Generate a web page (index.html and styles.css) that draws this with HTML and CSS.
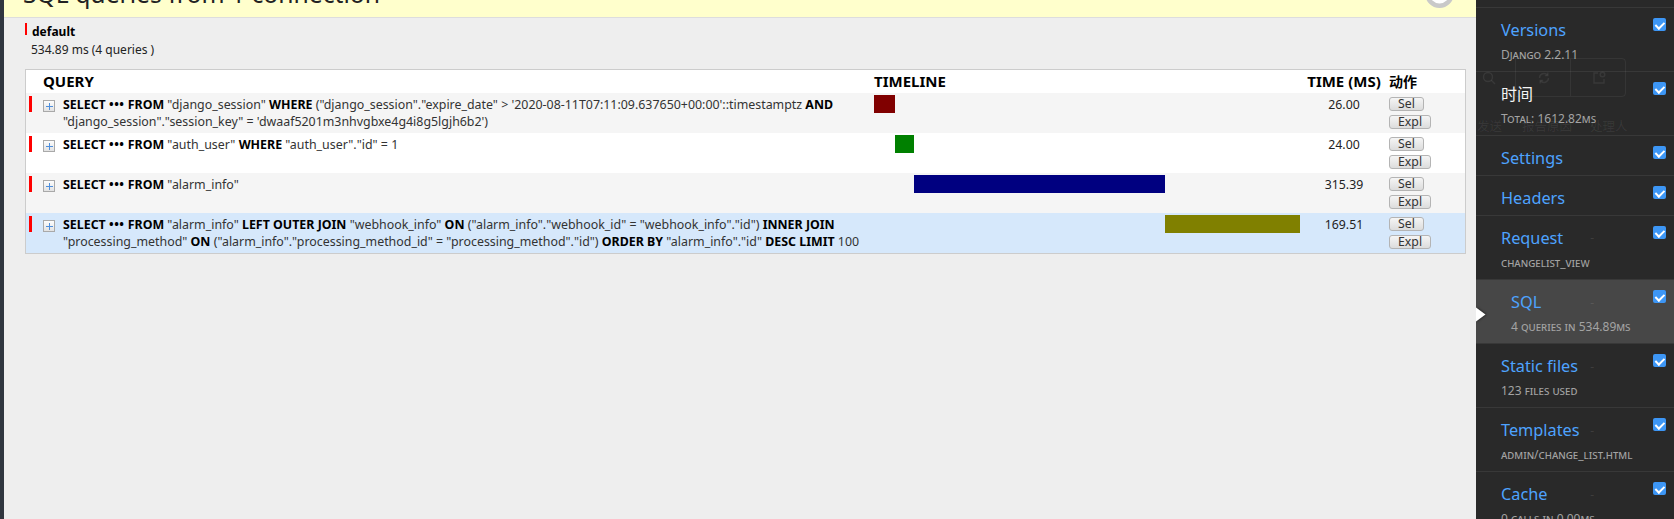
FILE: index.html
```html
<!DOCTYPE html>
<html lang="en">
<head>
<meta charset="utf-8">
<title>SQL queries</title>
<link rel="stylesheet" href="styles.css">
</head>
<body>
<div class="app">
  <div class="edge"></div>
  <main class="panel">
    <div class="panel-title">
      <h3>SQL queries from 1 connection</h3>
      <span class="close"><svg width="29" height="29" viewBox="0 0 29 29"><circle cx="14.5" cy="14.5" r="12.2" fill="#ffffff" stroke="#c9c9c9" stroke-width="4.4"/></svg></span>
    </div>
    <div class="panel-content">
      <h4 class="db-name"><span class="swatch"></span><span class="db-label">default</span></h4>
      <p class="db-summary">534.89 ms (4 queries )</p>
      <table class="sql">
        <colgroup>
          <col class="c-color"><col class="c-toggle"><col class="c-query"><col class="c-timeline"><col class="c-time"><col class="c-actions">
        </colgroup>
        <thead>
          <tr>
            <th class="h-color"></th>
            <th class="h-query" colspan="2">Query</th>
            <th class="h-timeline">Timeline</th>
            <th class="h-time">Time (ms)</th>
            <th class="h-actions">动作</th>
          </tr>
        </thead>
        <tbody>
          <tr class="odd">
            <td class="color"><span class="marker"></span></td>
            <td class="toggle"><span class="toggle-box"><svg width="10" height="10" viewBox="0 0 10 10"><path d="M5.5 2v7M2 5.5h7" stroke="#4f8fdc" stroke-width="1"/></svg></span></td>
            <td class="query"><b>SELECT</b> <b class="dots">•••</b> <b>FROM</b> "django_session" <b>WHERE</b> ("django_session"."expire_date" &gt; '2020-08-11T07:11:09.637650+00:00'::timestamptz <b>AND</b> "django_session"."session_key" = 'dwaaf5201m3nhvgbxe4g4i8g5lgjh6b2')</td>
            <td class="timeline"><div class="bar" style="margin-left:0%;width:4.86%;background:#800000"></div></td>
            <td class="time">26.00</td>
            <td class="actions"><button class="btn">Sel</button><button class="btn">Expl</button></td>
          </tr>
          <tr class="even">
            <td class="color"><span class="marker"></span></td>
            <td class="toggle"><span class="toggle-box"><svg width="10" height="10" viewBox="0 0 10 10"><path d="M5.5 2v7M2 5.5h7" stroke="#4f8fdc" stroke-width="1"/></svg></span></td>
            <td class="query"><b>SELECT</b> <b class="dots">•••</b> <b>FROM</b> "auth_user" <b>WHERE</b> "auth_user"."id" = 1</td>
            <td class="timeline"><div class="bar" style="margin-left:4.86%;width:4.49%;background:#008000"></div></td>
            <td class="time">24.00</td>
            <td class="actions"><button class="btn">Sel</button><button class="btn">Expl</button></td>
          </tr>
          <tr class="odd">
            <td class="color"><span class="marker"></span></td>
            <td class="toggle"><span class="toggle-box"><svg width="10" height="10" viewBox="0 0 10 10"><path d="M5.5 2v7M2 5.5h7" stroke="#4f8fdc" stroke-width="1"/></svg></span></td>
            <td class="query"><b>SELECT</b> <b class="dots">•••</b> <b>FROM</b> "alarm_info"</td>
            <td class="timeline"><div class="bar" style="margin-left:9.35%;width:58.96%;background:#000080"></div></td>
            <td class="time">315.39</td>
            <td class="actions"><button class="btn">Sel</button><button class="btn">Expl</button></td>
          </tr>
          <tr class="selected">
            <td class="color"><span class="marker"></span></td>
            <td class="toggle"><span class="toggle-box"><svg width="10" height="10" viewBox="0 0 10 10"><path d="M5.5 2v7M2 5.5h7" stroke="#4f8fdc" stroke-width="1"/></svg></span></td>
            <td class="query"><b>SELECT</b> <b class="dots">•••</b> <b>FROM</b> "alarm_info" <b>LEFT OUTER JOIN</b> "webhook_info" <b>ON</b> ("alarm_info"."webhook_id" = "webhook_info"."id") <b>INNER JOIN</b> "processing_method" <b>ON</b> ("alarm_info"."processing_method_id" = "processing_method"."id") <b>ORDER BY</b> "alarm_info"."id" <b>DESC LIMIT</b> 100</td>
            <td class="timeline"><div class="bar" style="margin-left:68.31%;width:31.69%;background:#808000"></div></td>
            <td class="time">169.51</td>
            <td class="actions"><button class="btn">Sel</button><button class="btn">Expl</button></td>
          </tr>
        </tbody>
      </table>
    </div>
  </main>
  <aside class="toolbar">
    <ul class="panels">
      <li class="cap"></li>
      <li><a class="entry" href="#"><span class="title">Versions</span><small>Django 2.2.11</small></a><span class="chk"></span></li>
      <li><div class="entry plain"><span class="title">时间</span><small>Total: 1612.82ms</small></div><span class="chk"></span></li>
      <li><a class="entry" href="#"><span class="title">Settings</span></a><span class="chk"></span></li>
      <li><a class="entry" href="#"><span class="title">Headers</span></a><span class="chk"></span></li>
      <li><a class="entry" href="#"><span class="title">Request</span><small>changelist_view</small></a><span class="chk"></span></li>
      <li class="active"><span class="indicator"><svg width="11" height="15" viewBox="0 0 11 15"><path d="M0 0.5L9.5 7.5L0 14.5Z" fill="#ffffff"/></svg></span><a class="entry" href="#"><span class="title">SQL</span><small>4 queries in 534.89ms</small></a><span class="chk"></span></li>
      <li><a class="entry" href="#"><span class="title">Static files</span><small>123 files used</small></a><span class="chk"></span></li>
      <li><a class="entry" href="#"><span class="title">Templates</span><small>admin/change_list.html</small></a><span class="chk"></span></li>
      <li><a class="entry" href="#"><span class="title">Cache</span><small>0 calls in 0.00ms</small></a><span class="chk"></span></li>
    </ul>
    <div class="ghost" aria-hidden="true">
      <span class="g-box"></span>
      <span class="g-icon g-search"><svg width="14" height="14" viewBox="0 0 14 14"><circle cx="6" cy="6" r="4.5" fill="none" stroke="currentColor" stroke-width="1.4"/><path d="M9.3 9.3L13 13" stroke="currentColor" stroke-width="1.4"/></svg></span>
      <span class="g-icon g-refresh"><svg width="14" height="14" viewBox="0 0 14 14"><path d="M2.5 7a4.5 4.5 0 0 1 8-2.8M11.5 7a4.5 4.5 0 0 1-8 2.8" fill="none" stroke="currentColor" stroke-width="1.4"/><path d="M10.8 1.5v3h-3M3.2 12.5v-3h3" fill="none" stroke="currentColor" stroke-width="1.4"/></svg></span>
      <span class="g-icon g-export"><svg width="14" height="14" viewBox="0 0 14 14"><path d="M6 2H2v10h10V8" fill="none" stroke="currentColor" stroke-width="1.4"/><circle cx="10.5" cy="3.5" r="2.3" fill="none" stroke="currentColor" stroke-width="1.4"/></svg></span>
      <span class="g-text g-t1">发送</span>
      <span class="g-text g-t2">报告原因</span>
      <span class="g-text g-t3">处理人</span>
      <span class="g-dash g-d1">-</span>
      <span class="g-dash g-d2">-</span>
      <span class="g-dash g-d3">-</span>
      <span class="g-dash g-d4">-</span>
      <span class="g-dash g-d5">-</span>
    </div>
  </aside>
</div>
</body>
</html>
```
FILE: styles.css
```css
* { box-sizing: border-box; }
html, body { margin: 0; padding: 0; }
body {
  width: 1674px;
  height: 519px;
  overflow: hidden;
  background: #eeeeee;
  font-family: "Noto Sans", "Noto Sans CJK SC", sans-serif;
  color: #333;
}
.app { display: flex; height: 519px; }
.edge { width: 4px; flex: none; background: #30363f; }

/* ---------- main panel ---------- */
.panel {
  width: 1472px;
  flex: none;
  background: #eeeeee;
  display: flex;
  flex-direction: column;
}
.panel-title {
  height: 18px;
  flex: none;
  background: #ffffcc;
  border-bottom: 1px solid #dddddd;
  overflow: hidden;
  position: relative;
}
.panel-title h3 {
  margin: -21.5px 0 0 19px;
  font-size: 24.7px;
  line-height: 30px;
  font-weight: normal;
  color: #222;
  white-space: nowrap;
}
.close {
  position: absolute;
  right: 22px;
  top: -21px;
  width: 29px;
  height: 29px;
}
.close svg { display: block; }
.panel-content { padding: 5px 10px 0 21px; }
.db-name {
  display: flex;
  align-items: flex-start;
  margin: 0;
  font-size: 12px;
  font-weight: bold;
  color: #000;
}
.swatch { width: 2px; height: 12px; background: #ff0000; margin-right: 5px; flex: none; }
.db-label { margin-top: 1px; line-height: 16px; }
.db-summary {
  margin: 2px 0 0 6px;
  font-size: 12px;
  line-height: 16px;
  color: #222;
}

/* ---------- table ---------- */
.sql {
  margin-top: 11px;
  width: 1441px;
  table-layout: fixed;
  border-collapse: separate;
  border-spacing: 0;
  border: 1px solid #cccccc;
  background: #ffffff;
}
.c-color { width: 10px; }
.c-toggle { width: 23px; }
.c-query { width: 811px; }
.c-timeline { width: 433px; }
.c-time { width: 82px; }
.c-actions { width: 80px; }
.sql th {
  height: 23px;
  padding: 0 4px;
  font-size: 15px;
  line-height: 23px;
  font-weight: bold;
  text-align: left;
  text-transform: uppercase;
  color: #000;
  white-space: nowrap;
  background: #ffffff;
}
.sql th.h-color { padding: 0; }
.sql th.h-query { padding-left: 7px; }
.sql th.h-time { text-align: center; padding: 0; }
.sql th.h-actions { font-size: 14px; }
.sql td {
  height: 40px;
  vertical-align: top;
  padding: 3px 4px 0 4px;
  font-size: 12.4px;
  line-height: 17px;
}
.sql tr.odd td { background: #f5f5f5; }
.sql tr.even td { background: #ffffff; }
.sql tr.selected td { background: #d6e8fb; }
.sql td.color { padding: 3px 0 0 3px; }
.marker { display: block; width: 3px; height: 16px; background: #ff0000; }
.sql td.toggle { padding: 7px 0 0 7px; }
.toggle-box {
  display: block;
  width: 12px;
  height: 12px;
  border: 1px solid #a9a9a9;
  background: linear-gradient(#fdfdfd, #e2e2e2);
}
.toggle-box svg { display: block; }
.sql td.query { color: #333; padding-right: 0; }
.sql td.query b { color: #000; font-weight: bold; }
.sql td.query b.dots { letter-spacing: 0.5px; }
.sql td.timeline { padding: 2px 3px 0 4px; }
.bar { height: 17.5px; }
.sql td.time { text-align: center; color: #222; padding: 3px 0 0 0; font-size: 12.3px; }
.sql td.actions { padding: 4px 0 0 4px; }
.btn {
  display: block;
  height: 13.5px;
  margin: 0 0 4.5px 0;
  padding: 0 8px;
  border: 1px solid #b4b4b4;
  border-radius: 3px;
  background: linear-gradient(#f5f5f5, #dcdcdc);
  font-family: "Noto Sans", sans-serif;
  font-size: 12.3px;
  line-height: 11px;
  color: #333;
}

/* ---------- toolbar ---------- */
.toolbar {
  width: 198px;
  flex: none;
  background: #292929;
  position: relative;
  overflow: hidden;
}
.panels { list-style: none; margin: 0; padding: 0; }
.panels li {
  display: flex;
  align-items: flex-start;
  border-bottom: 1px solid #383838;
  position: relative;
}
.panels li.cap { height: 8px; }
.panels li.active { background: #474747; }
.entry {
  flex: 1;
  display: block;
  padding: 11px 10px 6px 25px;
  text-decoration: none;
}
.panels li.active .entry { padding-left: 35px; }
.entry .title {
  display: block;
  font-size: 16.3px;
  line-height: 22px;
  color: #4ea3ff;
  white-space: nowrap;
}
.entry.plain .title { color: #f4f4f4; font-size: 16px; }
.entry small {
  display: block;
  margin: 6px 0 2px 0;
  font-size: 12px;
  line-height: 16px;
  font-variant: small-caps;
  color: #a3a3a3;
  white-space: nowrap;
}
.chk {
  flex: none;
  width: 13px;
  height: 13px;
  margin: 10px 8px 0 0;
  background: #3d96f5;
  border-radius: 2px;
  position: relative;
}
.chk::after {
  content: "";
  position: absolute;
  left: 4px;
  top: 1.5px;
  width: 3.5px;
  height: 7px;
  border: solid #ffffff;
  border-width: 0 2px 2px 0;
  transform: rotate(45deg);
}
.indicator {
  position: absolute;
  left: 0;
  top: 27px;
  width: 11px;
  height: 15px;
  filter: drop-shadow(1px 0 1px rgba(0,0,0,0.5));
}
.indicator svg { display: block; }

/* faint content of the page below the translucent toolbar */
.ghost {
  position: absolute;
  inset: 0;
  pointer-events: none;
  color: rgba(255, 255, 255, 0.075);
  font-family: "Noto Sans CJK SC", "Noto Sans", sans-serif;
}
.g-box {
  position: absolute;
  left: 39px;
  top: 58px;
  width: 111px;
  height: 39px;
  border: 1px solid rgba(255, 255, 255, 0.06);
  border-radius: 0 4px 4px 0;
}
.g-box::after {
  content: "";
  position: absolute;
  left: 54px;
  top: 0;
  bottom: 0;
  border-left: 1px solid rgba(255, 255, 255, 0.06);
}
.g-icon { position: absolute; top: 71px; width: 14px; height: 14px; }
.g-icon svg { display: block; }
.g-search { left: 6px; }
.g-refresh { left: 61px; }
.g-export { left: 116px; }
.g-text { position: absolute; top: 117px; font-size: 12.5px; line-height: 18px; white-space: nowrap; }
.g-t1 { left: 1px; }
.g-t2 { left: 46px; }
.g-t3 { left: 114px; }
.g-dash { position: absolute; left: 114px; font-size: 12px; line-height: 14px; color: rgba(255,255,255,0.12); }
.g-d1 { top: 230px; }
.g-d2 { top: 295px; }
.g-d3 { top: 359px; }
.g-d4 { top: 423px; }
.g-d5 { top: 487px; }
```
